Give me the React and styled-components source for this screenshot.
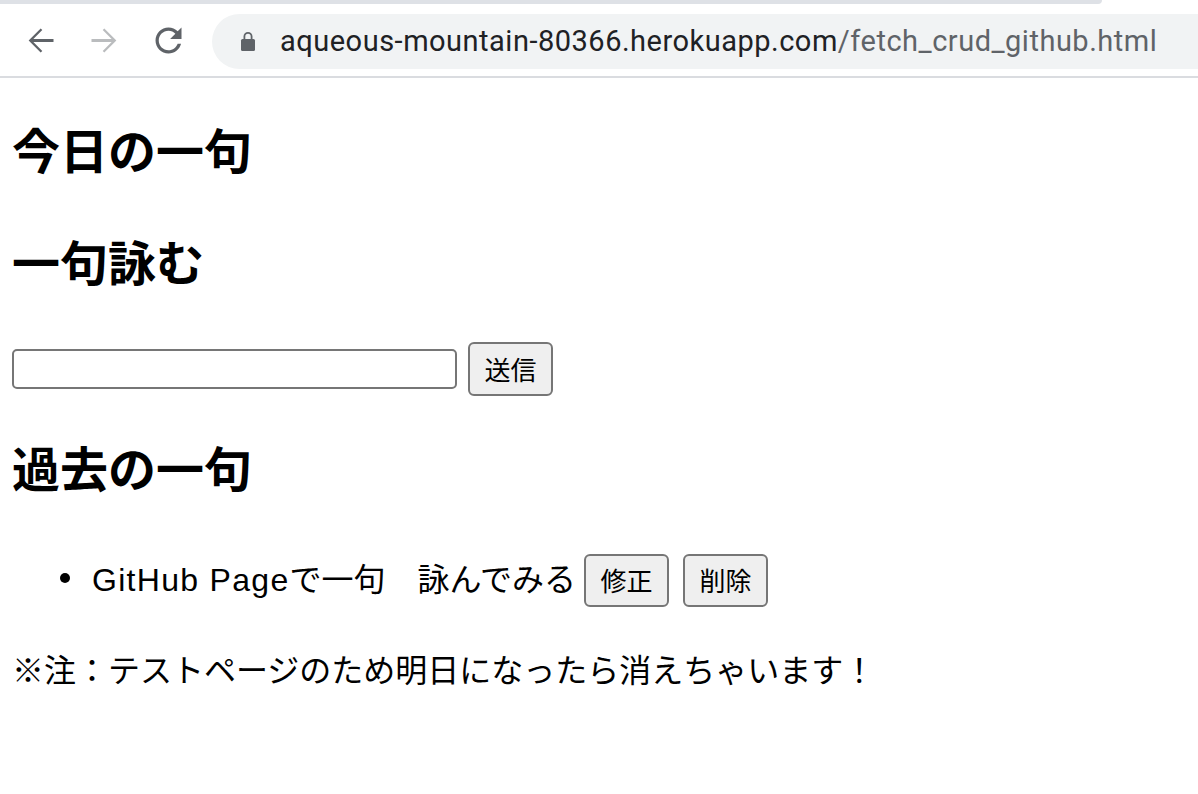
import React from "react";
import styled, { createGlobalStyle } from "styled-components";

const Global = createGlobalStyle`
  html, body { margin: 0; padding: 0; background: #fff; }
  body { font-family: "Liberation Sans", "Noto Sans CJK JP", sans-serif; color: #000; }
`;

const TopStrip = styled.div`
  display: flex;
  height: 4px;
  background: #fff;
`;
const StripFill = styled.div`
  width: 1102px;
  background: #dee1e6;
  border-bottom-right-radius: 6px;
`;

const Toolbar = styled.div`
  display: flex;
  align-items: center;
  height: 72px;
  border-bottom: 2px solid #dadce0;
  background: #fff;
  padding-left: 20px;
`;

const NavButton = styled.div`
  width: 40px;
  height: 40px;
  display: flex;
  align-items: center;
  justify-content: center;
  margin-right: 24px;
  color: ${(p) => p.$color || "#5f6368"};
`;

const Omnibox = styled.div`
  flex: 1;
  display: flex;
  align-items: center;
  height: 55px;
  margin-top: 2px;
  background: #f1f3f4;
  border-radius: 28px 0 0 28px;
  padding-left: 28px;
  font-family: "Roboto", "Liberation Sans", sans-serif;
  font-size: 29px;
  letter-spacing: 0.5px;
  white-space: nowrap;
  overflow: hidden;
`;

const Host = styled.span`
  color: #202124;
  margin-left: 24px;
`;
const Path = styled.span`
  color: #5f6368;
`;

const Main = styled.main`
  padding-left: 12px;
  font-family: "Liberation Sans", "Noto Sans CJK JP", sans-serif;
`;

const Heading = styled.h2`
  font-size: 48px;
  font-weight: bold;
  line-height: 60px;
  padding-bottom: 12px;
  margin: 40px 0;
  font-family: "Noto Sans CJK JP", sans-serif;
`;

const Form = styled.div`
  display: flex;
  align-items: center;
  height: 54px;
  gap: 11px;
`;

const TextInput = styled.input`
  box-sizing: border-box;
  width: 445px;
  height: 40px;
  border: 2px solid #767676;
  border-radius: 5px;
  background: #fff;
  font-size: 26px;
  padding: 0 4px;
  outline: none;
`;

const Button = styled.button`
  box-sizing: border-box;
  height: ${(p) => p.$h || 54}px;
  padding: 0 14.5px;
  margin: 0 0 0 ${(p) => p.$ml || 0}px;
  border: 2px solid #767676;
  border-radius: 6px;
  background: #efefef;
  color: #000;
  font-size: 26px;
  font-family: "Noto Sans CJK JP", sans-serif;
  line-height: 1;
`;

const List = styled.ul`
  list-style: none;
  margin: 40px 0 32px;
  padding-left: 48px;
`;

const Item = styled.li`
  display: flex;
  align-items: center;
  height: 64px;
  font-size: 32px;
  &::before {
    content: "";
    width: 10px;
    height: 10px;
    border-radius: 50%;
    background: #000;
    margin-right: 22px;
    margin-bottom: 4px;
    flex: none;
  }
`;

const ItemText = styled.span`
  white-space: pre;
  padding-bottom: 6px;
`;

const Latin = styled.span`
  letter-spacing: 1.3px;
`;

const Note = styled.p`
  margin: 0;
  font-size: 32px;
  line-height: 48px;
  font-family: "Noto Sans CJK JP", sans-serif;
`;

const Back = () => (
  <svg width="39" height="39" viewBox="0 0 24 24" fill="currentColor">
    <path d="M20 11.1H7.6l5.5-5.5L12.1 4.6 4.7 12l7.4 7.4 1-1-5.5-5.5H20z" />
  </svg>
);
const Forward = () => (
  <svg width="39" height="39" viewBox="0 0 24 24" fill="currentColor">
    <path d="M4 11.1h12.4l-5.5-5.5 1-1L19.3 12l-7.4 7.4-1-1 5.5-5.5H4z" />
  </svg>
);
const Reload = () => (
  <svg width="39" height="39" viewBox="0 0 24 24" fill="currentColor">
    <path d="M17.65 6.35C16.2 4.9 14.21 4 12 4c-4.42 0-7.99 3.58-7.99 8s3.57 8 7.99 8c3.73 0 6.84-2.55 7.73-6h-2.08c-.82 2.33-3.04 4-5.650 4-3.31 0-6-2.69-6-6s2.69-6 6-6c1.66 0 3.14.69 4.22 1.78L13 11h7V4l-2.35 2.35z" />
  </svg>
);
const Lock = () => (
  <svg width="16" height="20" viewBox="0 0 16 20" fill="#5f6368">
    <path d="M3.5 8V5.5a4.5 4.5 0 0 1 9 0V8h-1.8V5.5a2.7 2.7 0 0 0-5.4 0V8z" />
    <rect x="1" y="8" width="14" height="12" rx="1.5" />
  </svg>
);

export default function App() {
  return (
    <>
      <Global />
      <TopStrip>
        <StripFill />
      </TopStrip>
      <Toolbar>
        <NavButton>
          <Back />
        </NavButton>
        <NavButton $color="#babcbe">
          <Forward />
        </NavButton>
        <NavButton>
          <Reload />
        </NavButton>
        <Omnibox>
          <Lock />
          <Host>aqueous-mountain-80366.herokuapp.com</Host>
          <Path>/fetch_crud_github.html</Path>
        </Omnibox>
      </Toolbar>
      <Main>
        <Heading>今日の一句</Heading>
        <Heading>一句詠む</Heading>
        <Form>
          <TextInput type="text" />
          <Button>送信</Button>
        </Form>
        <Heading>過去の一句</Heading>
        <List>
          <Item>
            <ItemText>
              <Latin>GitHub Page</Latin>で一句　詠んでみる
            </ItemText>
            <Button $ml={8} $h={53}>修正</Button>
            <Button $ml={14} $h={53}>削除</Button>
          </Item>
        </List>
        <Note>※注：テストページのため明日になったら消えちゃいます！</Note>
      </Main>
    </>
  );
}
